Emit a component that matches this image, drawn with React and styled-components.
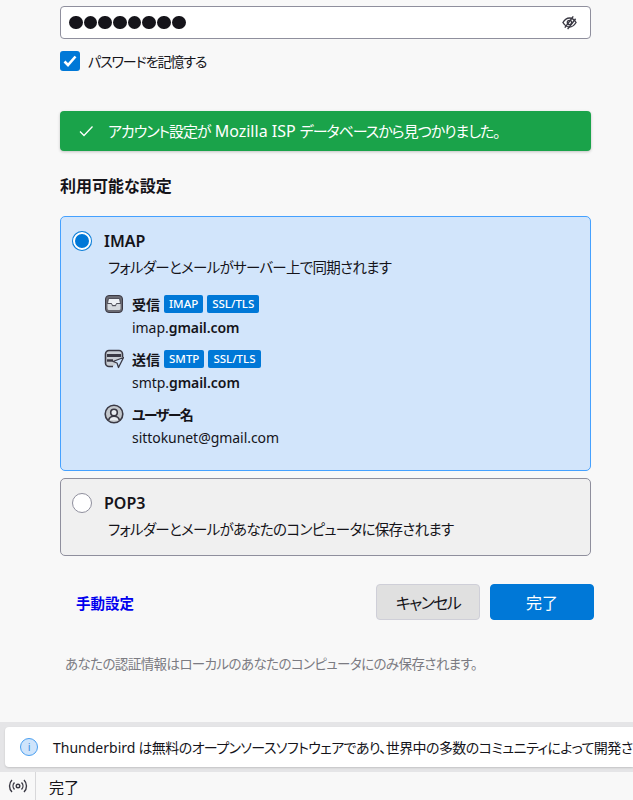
import React from "react";
import styled, { createGlobalStyle } from "styled-components";

const GlobalStyle = createGlobalStyle`
  html, body { margin: 0; padding: 0; height: 100%; overflow: hidden; }
  body {
    background: #f8f8f8;
    color: #15141a;
    font-family: "Noto Sans", "Noto Sans CJK JP", sans-serif;
    font-size: 14px;
    font-feature-settings: "palt";
  }
  * { box-sizing: border-box; }
`;

const Page = styled.div`
  width: 633px;
  height: 800px;
  display: flex;
  flex-direction: column;
  overflow: hidden;
`;

const Main = styled.main`
  flex: 1;
  padding: 6px 42px 0 60px;
  min-height: 0;
`;

const PasswordField = styled.div`
  height: 33px;
  background: #fff;
  border: 1px solid #8f8f9d;
  border-radius: 4px;
  display: flex;
  align-items: center;
  justify-content: space-between;
  padding: 0 13px 0 8px;
`;

const Dots = styled.div`
  display: flex;
  gap: 1px;
`;

const Dot = styled.span`
  width: 13.7px;
  height: 13.7px;
  border-radius: 50%;
  background: #15141a;
`;

const EyeIcon = styled.svg`
  width: 15px;
  height: 15px;
  display: block;
  color: #3a3944;
`;

const CheckRow = styled.label`
  display: flex;
  align-items: center;
  gap: 8px;
  height: 20px;
  margin-top: 12px;
  font-size: 14px;
  letter-spacing: -1.1px;
`;

const CheckBox = styled.span`
  width: 20px;
  height: 20px;
  border-radius: 3px;
  background: #0078d7;
  display: flex;
  align-items: center;
  justify-content: center;
`;

const SuccessBanner = styled.div`
  margin-top: 40px;
  height: 40px;
  background: #1aa34a;
  border-radius: 4px;
  box-shadow: 0 1px 3px rgba(0, 0, 0, 0.22);
  color: #fff;
  display: flex;
  align-items: center;
  gap: 14px;
  padding-left: 18px;
  font-size: 15px;
  letter-spacing: -1.05px;
`;

const BannerText = styled.span`
  white-space: pre;
`;

const Latin = styled.span`
  font-size: ${(p) => p.$size}px;
  letter-spacing: 0;
`;

const SectionTitle = styled.h2`
  margin: 24px 0 0;
  height: 22px;
  line-height: 22px;
  font-size: 16px;
  font-weight: 700;
`;

const ConfigCard = styled.div`
  margin-top: ${(p) => p.$top}px;
  height: ${(p) => p.$height}px;
  border-radius: 5px;
  border: 1px solid ${(p) => (p.$selected ? "#45a1ff" : "#8f8f9d")};
  background: ${(p) => (p.$selected ? "#d2e5fb" : "#f0f0f0")};
  padding: 14px 11px 0 11px;
`;

const CardHead = styled.div`
  display: flex;
  align-items: center;
  gap: 12px;
  height: 20px;
`;

const Radio = styled.span`
  width: 20px;
  height: 20px;
  border-radius: 50%;
  background: ${(p) => (p.$on ? "#0078d7" : "#fff")};
  border: ${(p) => (p.$on ? "none" : "1px solid #8f8f9d")};
  box-shadow: ${(p) => (p.$on ? "inset 0 0 0 1px #0078d7, inset 0 0 0 3px #fff" : "none")};
`;

const CardTitle = styled.span`
  font-size: 16px;
  font-weight: 600;
  line-height: 20px;
`;

const CardDesc = styled.p`
  margin: 5px 0 0 36px;
  font-size: 14.5px;
  line-height: 22px;
  letter-spacing: -0.7px;
`;

const Details = styled.div`
  margin: 16px 0 0 32px;
  display: flex;
  flex-direction: column;
  gap: 11px;
`;

const DetailItem = styled.div`
  display: flex;
  flex-direction: column;
  gap: 4px;
`;

const DetailHead = styled.div`
  display: flex;
  align-items: center;
  height: 20px;
`;

const DetailIcon = styled.svg`
  width: 20px;
  height: 20px;
  margin-right: 8px;
  color: #3a3944;
  flex: none;
`;

const DetailLabel = styled.span`
  font-size: 14px;
  font-weight: 700;
  margin-right: 4px;
  letter-spacing: ${(p) => (p.$kana ? "-1.6px" : "0")};
`;

const Tag = styled.span`
  background: #0078d7;
  color: #fff;
  border-radius: 2px;
  font-size: 11.5px;
  font-weight: 500;
  height: 18px;
  line-height: 18px;
  padding: 0 5px;
  margin-right: 4px;
`;

const DetailValue = styled.div`
  margin-left: 28px;
  font-size: 14px;
  line-height: 20px;
  letter-spacing: -0.05px;
  strong { font-weight: 600; }
`;

const ButtonRow = styled.div`
  margin: 28px -3px 0 0;
  display: flex;
  align-items: center;
  gap: 10px;
`;

const ManualLink = styled.a`
  margin: 0 auto 0 16px;
  color: #0000ee;
  font-size: 14.5px;
  font-weight: 600;
`;

const Button = styled.button`
  width: 104px;
  height: 36px;
  border-radius: 4px;
  font-family: inherit;
  font-feature-settings: inherit;
  font-size: 16px;
  padding: 0;
  border: 1px solid ${(p) => (p.$primary ? "#0078d7" : "#cfcfd8")};
  background: ${(p) => (p.$primary ? "#0078d7" : "#e0e0e0")};
  color: ${(p) => (p.$primary ? "#fff" : "#15141a")};
  letter-spacing: ${(p) => (p.$primary ? "0" : "-1.6px")};
`;

const Hint = styled.p`
  margin: 34px 0 0 5px;
  font-size: 13.5px;
  line-height: 20px;
  color: #7b7b82;
  letter-spacing: -0.6px;
`;

const NoticeBar = styled.div`
  height: 50px;
  background: #e5e5e7;
  padding: 5px 0 5px 5px;
  overflow: hidden;
`;

const Notice = styled.div`
  width: 628px;
  height: 40px;
  background: #fff;
  border-radius: 4px 0 0 4px;
  box-shadow: 0 1px 2px rgba(0, 0, 0, 0.15);
  display: flex;
  align-items: center;
  gap: 15px;
  padding-left: 15px;
  white-space: nowrap;
  overflow: hidden;
  font-size: 14px;
  letter-spacing: -0.58px;
`;

const InfoBadge = styled.span`
  width: 18px;
  height: 18px;
  flex: none;
  border-radius: 50%;
  background: #cfe4fb;
  border: 1.5px solid #4a9ff0;
  color: #3d8fe0;
  font-size: 11px;
  line-height: 15px;
  text-align: center;
`;

const StatusBar = styled.footer`
  height: 28px;
  background: #f8f8f8;
  display: flex;
  align-items: stretch;
  font-size: 15px;
`;

const StatusIconCell = styled.div`
  width: 36px;
  border-right: 1px solid #d8d8da;
  display: flex;
  align-items: center;
  justify-content: center;
`;

const StatusText = styled.div`
  padding-left: 13px;
  display: flex;
  align-items: center;
`;

const InboxGlyph = () => (
  <DetailIcon viewBox="0 0 20 20" fill="none">
    <rect x="1.500" y="1.500" width="17" height="17" rx="3.500" fill="#6a6a72" stroke="#3a3944" />
    <path d="M4.500 4.500h11l1 5h-4l-1 2h-3l-1-2h-4z" fill="#eef1f5" stroke="#3a3944" strokeWidth="0.800" />
    <path d="M3.500 10h3.700l1 2.200h3.600l1-2.200h3.700v4.500a1.500 1.500 0 0 1-1.500 1.500H5a1.500 1.500 0 0 1-1.500-1.500z" fill="#d5d9de" />
  </DetailIcon>
);

const OutboxGlyph = () => (
  <DetailIcon viewBox="0 0 20 20" fill="none">
    <path d="M9 17.500H5A3.500 3.500 0 0 1 1.500 14V5A3.500 3.500 0 0 1 5 1.500h10A3.500 3.500 0 0 1 18.500 5v3" fill="#c9ced4" stroke="#3a3944" strokeWidth="1.600" />
    <path d="M3 6.500h14" stroke="#3a3944" strokeWidth="3" />
    <path d="M3 11.500h6" stroke="#3a3944" strokeWidth="2.400" />
    <path d="M19.500 8.500l-10.500 4 4 1.500 1.500 4.500z" fill="#d2e5fb" stroke="#3a3944" strokeWidth="1.300" strokeLinejoin="round" />
  </DetailIcon>
);

const UserGlyph = () => (
  <DetailIcon viewBox="0 0 20 20" fill="none" stroke="currentColor" strokeWidth="1.600">
    <circle cx="10" cy="10" r="8.800" fill="#c4c8cd" />
    <circle cx="10" cy="8.500" r="3.300" fill="#e9edf2" />
    <path d="M4.600 16.300c.6-2.800 2.600-4 5.400-4s4.800 1.200 5.400 4" fill="#e9edf2" />
  </DetailIcon>
);

const App = () => {
  return (
    <>
      <GlobalStyle />
      <Page>
        <Main>
          <PasswordField>
            <Dots>
              {Array.from({ length: 8 }, (_, i) => (
                <Dot key={i} />
              ))}
            </Dots>
            <EyeIcon viewBox="0 0 16 16" fill="none" stroke="currentColor" strokeWidth="1.500">
              <path d="M1 8c2-3.200 4.400-4.800 7-4.800S13 4.800 15 8c-2 3.200-4.400 4.800-7 4.800S3 11.200 1 8z" />
              <circle cx="8" cy="8" r="2.300" />
              <path d="M3 13.500L12 1.500M6 15L14.500 4" />
            </EyeIcon>
          </PasswordField>

          <CheckRow>
            <CheckBox>
              <svg width="16" height="16" viewBox="0 0 16 16" fill="none">
                <path d="M2.500 8.500l3.500 3.500L13.500 3.500" stroke="#fff" strokeWidth="2.600" />
              </svg>
            </CheckBox>
            パスワードを記憶する
          </CheckRow>

          <SuccessBanner>
            <svg width="16" height="16" viewBox="0 0 16 16" fill="none">
              <path d="M2 8.500l4 4L14.500 3.500" stroke="#fff" strokeWidth="1.300" />
            </svg>
            <BannerText>
              アカウント設定が<Latin $size={16}> Mozilla ISP </Latin>データベースから見つかりました。
            </BannerText>
          </SuccessBanner>

          <SectionTitle>利用可能な設定</SectionTitle>

          <ConfigCard $selected $top={19} $height={255}>
            <CardHead>
              <Radio $on />
              <CardTitle>IMAP</CardTitle>
            </CardHead>
            <CardDesc>フォルダーとメールがサーバー上で同期されます</CardDesc>
            <Details>
              <DetailItem>
                <DetailHead>
                  <InboxGlyph />
                  <DetailLabel>受信</DetailLabel>
                  <Tag>IMAP</Tag>
                  <Tag>SSL/TLS</Tag>
                </DetailHead>
                <DetailValue>
                  imap.<strong>gmail.com</strong>
                </DetailValue>
              </DetailItem>
              <DetailItem>
                <DetailHead>
                  <OutboxGlyph />
                  <DetailLabel>送信</DetailLabel>
                  <Tag>SMTP</Tag>
                  <Tag>SSL/TLS</Tag>
                </DetailHead>
                <DetailValue>
                  smtp.<strong>gmail.com</strong>
                </DetailValue>
              </DetailItem>
              <DetailItem>
                <DetailHead>
                  <UserGlyph />
                  <DetailLabel $kana>ユーザー名</DetailLabel>
                </DetailHead>
                <DetailValue>sittokunet@gmail.com</DetailValue>
              </DetailItem>
            </Details>
          </ConfigCard>

          <ConfigCard $top={7} $height={78}>
            <CardHead>
              <Radio />
              <CardTitle>POP3</CardTitle>
            </CardHead>
            <CardDesc>フォルダーとメールがあなたのコンピュータに保存されます</CardDesc>
          </ConfigCard>

          <ButtonRow>
            <ManualLink>手動設定</ManualLink>
            <Button>キャンセル</Button>
            <Button $primary>完了</Button>
          </ButtonRow>

          <Hint>あなたの認証情報はローカルのあなたのコンピュータにのみ保存されます。</Hint>
        </Main>

        <NoticeBar>
          <Notice>
            <InfoBadge>i</InfoBadge>
            <span>
              <Latin $size={14}>Thunderbird</Latin> は無料のオープンソースソフトウェアであり、世界中の多数のコミュニティによって開発されています。
            </span>
          </Notice>
        </NoticeBar>

        <StatusBar>
          <StatusIconCell>
            <svg width="20" height="16" viewBox="0 0 20 16" fill="none" stroke="#3a3944" strokeWidth="1.400">
              <circle cx="10" cy="8" r="1.800" />
              <path d="M6.500 4.500a5 5 0 0 0 0 7M13.500 4.500a5 5 0 0 1 0 7M4 2a8.500 8.500 0 0 0 0 12M16 2a8.500 8.500 0 0 1 0 12" />
            </svg>
          </StatusIconCell>
          <StatusText>完了</StatusText>
        </StatusBar>
      </Page>
    </>
  );
};

export default App;
